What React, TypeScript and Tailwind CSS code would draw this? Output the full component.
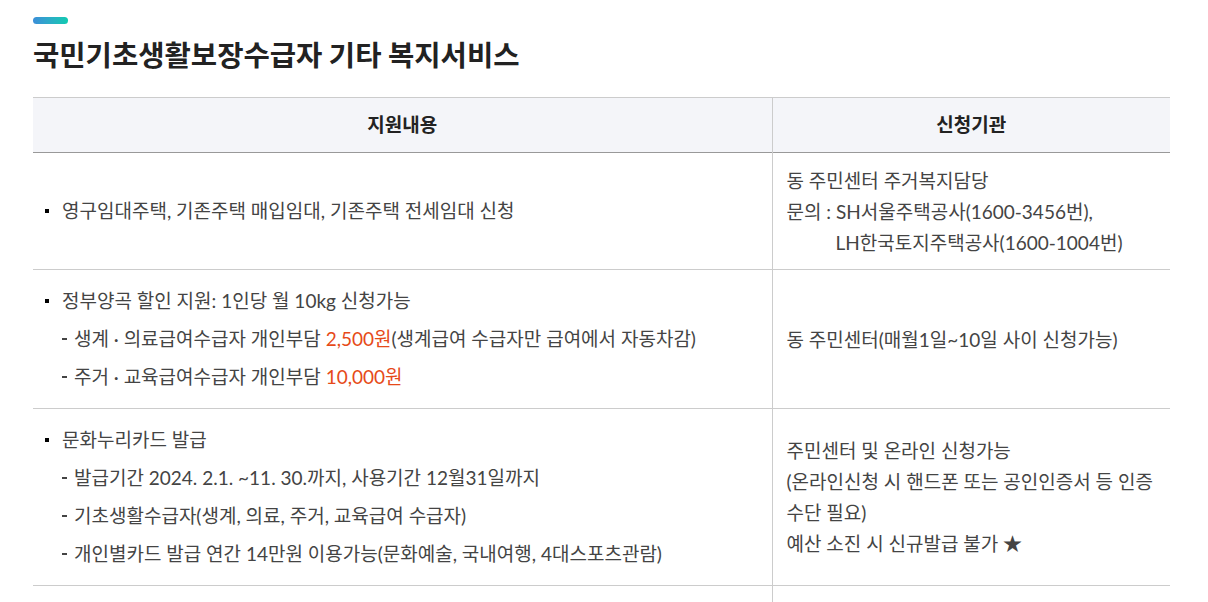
const font = { fontFamily: 'Lato, "Noto Sans CJK KR", sans-serif' };

const Bullet = ({ children }: { children: React.ReactNode }) => (
  <li className="flex items-center leading-[38px]">
    <span className="w-[4px] h-[4px] bg-black mr-[13px] shrink-0" />
    <span>{children}</span>
  </li>
);

const Sub = ({ children }: { children: React.ReactNode }) => (
  <li className="flex items-center leading-[38px] pl-[17px]">
    <span className="w-[5px] h-[2px] bg-[#444] mr-[7px] shrink-0" />
    <span>{children}</span>
  </li>
);

const Amount = ({ children }: { children: React.ReactNode }) => (
  <span className="text-[#e64a19]">{children}</span>
);

export default function App() {
  return (
    <div className="bg-white min-h-screen px-[33px] pt-[17px] text-[#444]" style={font}>
      <div className="w-[35px] h-[7px] rounded-full bg-gradient-to-r from-[#3b8ed8] to-[#0fcab0]" />
      <h1
        className="mt-[10px] text-[28.6px] font-bold text-[#222] leading-[40px]"
        style={{ fontFamily: '"Noto Sans CJK KR", sans-serif' }}
      >
        국민기초생활보장수급자 기타 복지서비스
      </h1>

      <table className="mt-[23px] w-[1137px] border-collapse text-[19px]">
        <colgroup>
          <col className="w-[739px]" />
          <col />
        </colgroup>
        <thead>
          <tr className="bg-[#f4f5f9] border-t border-[#cccccc] border-b border-b-[#999999]">
            <th className="h-[55px] font-bold text-[#222] text-center border-r border-[#cccccc]">지원내용</th>
            <th className="h-[55px] font-bold text-[#222] text-center">신청기관</th>
          </tr>
        </thead>
        <tbody>
          <tr className="border-b border-[#cccccc]">
            <td className="align-middle border-r border-[#cccccc] pl-[12px]">
              <ul>
                <Bullet>영구임대주택, 기존주택 매입임대, 기존주택 전세임대 신청</Bullet>
              </ul>
            </td>
            <td className="align-middle px-[14px] pt-[12px] pb-[11px] leading-[31px]">
              <p>동 주민센터 주거복지담당</p>
              <p>문의 : SH서울주택공사(1600-3456번),</p>
              <p className="pl-[49px]">LH한국토지주택공사(1600-1004번)</p>
            </td>
          </tr>
          <tr className="border-b border-[#cccccc]">
            <td className="align-middle border-r border-[#cccccc] pl-[12px] py-[12px]">
              <ul>
                <Bullet>정부양곡 할인 지원: 1인당 월 10kg 신청가능</Bullet>
                <Sub>
                  생계 · 의료급여수급자 개인부담 <Amount>2,500원</Amount>(생계급여 수급자만 급여에서 자동차감)
                </Sub>
                <Sub>
                  주거 · 교육급여수급자 개인부담 <Amount>10,000원</Amount>
                </Sub>
              </ul>
            </td>
            <td className="align-middle px-[14px] py-[12px] leading-[31px]">
              <p>동 주민센터(매월1일~10일 사이 신청가능)</p>
            </td>
          </tr>
          <tr className="border-b border-[#cccccc]">
            <td className="align-middle border-r border-[#cccccc] pl-[12px] py-[12px]">
              <ul>
                <Bullet>문화누리카드 발급</Bullet>
                <Sub>발급기간 2024. 2.1. ~11. 30.까지, 사용기간 12월31일까지</Sub>
                <Sub>기초생활수급자(생계, 의료, 주거, 교육급여 수급자)</Sub>
                <Sub>개인별카드 발급 연간 14만원 이용가능(문화예술, 국내여행, 4대스포츠관람)</Sub>
              </ul>
            </td>
            <td className="align-middle px-[14px] py-[12px] leading-[31px]">
              <p>주민센터 및 온라인 신청가능</p>
              <p>(온라인신청 시 핸드폰 또는 공인인증서 등 인증 수단 필요)</p>
              <p>예산 소진 시 신규발급 불가 ★</p>
            </td>
          </tr>
          <tr>
            <td className="h-[60px] border-r border-[#cccccc]" />
            <td className="h-[60px]" />
          </tr>
        </tbody>
      </table>
    </div>
  );
}
